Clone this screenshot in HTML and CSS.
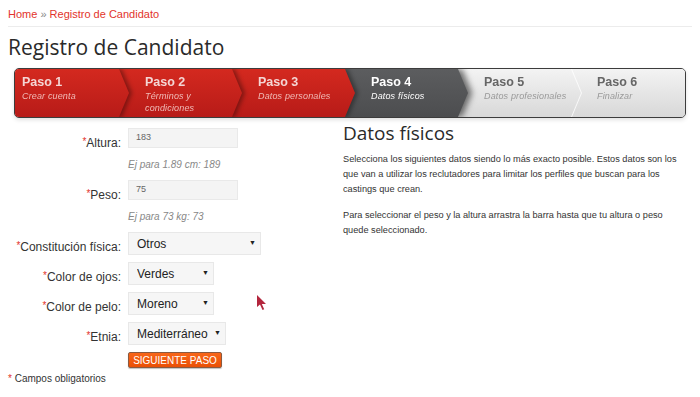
FILE: index.html
```html
<!DOCTYPE html>
<html lang="es">
<head>
    <meta charset="UTF-8">
    <meta name="viewport" content="width=device-width, initial-scale=1.0">
    <title>Registro de Candidato</title>
    <link rel="stylesheet" href="styles.css">
</head>
<body>
    <div class="breadcrumb">
        <a href="#">Home</a> <span class="sep">&raquo;</span> <a href="#">Registro de Candidato</a>
    </div>

    <h1>Registro de Candidato</h1>

    <div class="steps">
        <div class="step done first"><div class="step-body">
            <strong>Paso 1</strong><em>Crear cuenta</em>
        </div></div>
        <div class="step done"><div class="step-body">
            <strong>Paso 2</strong><em>Términos y condiciones</em>
        </div></div>
        <div class="step done"><div class="step-body">
            <strong>Paso 3</strong><em>Datos personales</em>
        </div></div>
        <div class="step current"><div class="step-body">
            <strong>Paso 4</strong><em>Datos físicos</em>
        </div></div>
        <div class="step todo"><div class="step-body">
            <strong>Paso 5</strong><em>Datos profesionales</em>
        </div></div>
        <div class="step todo last"><div class="step-body">
            <strong>Paso 6</strong><em>Finalizar</em>
        </div></div>
    </div>

    <div class="content">
        <form class="form">
            <div class="row">
                <label><span class="req">*</span>Altura:</label>
                <div class="field">
                    <input type="text" class="text-input" value="183">
                    <div class="hint">Ej para 1.89 cm: 189</div>
                </div>
            </div>
            <div class="row">
                <label><span class="req">*</span>Peso:</label>
                <div class="field">
                    <input type="text" class="text-input" value="75">
                    <div class="hint">Ej para 73 kg: 73</div>
                </div>
            </div>
            <div class="row">
                <label><span class="req">*</span>Constitución física:</label>
                <div class="select-wrap w-wide">
                    <select><option>Otros</option></select>
                </div>
            </div>
            <div class="row">
                <label><span class="req">*</span>Color de ojos:</label>
                <div class="select-wrap w-small">
                    <select><option>Verdes</option></select>
                </div>
            </div>
            <div class="row">
                <label><span class="req">*</span>Color de pelo:</label>
                <div class="select-wrap w-small">
                    <select><option>Moreno</option></select>
                </div>
            </div>
            <div class="row">
                <label><span class="req">*</span>Etnia:</label>
                <div class="select-wrap w-mid">
                    <select><option>Mediterráneo</option></select>
                </div>
            </div>
            <div class="row actions">
                <button type="button" class="btn-next">SIGUIENTE PASO</button>
            </div>
            <p class="required-note"><span class="req">*</span> Campos obligatorios</p>
        </form>

        <div class="info">
            <h2>Datos físicos</h2>
            <p>Selecciona los siguientes datos siendo lo más exacto posible. Estos datos son los que van a utilizar los reclutadores para limitar los perfiles que buscan para los castings que crean.</p>
            <p>Para seleccionar el peso y la altura arrastra la barra hasta que tu altura o peso quede seleccionado.</p>
        </div>
    </div>

    <svg class="cursor" width="10" height="16" viewBox="0 0 10 16">
        <path d="M0 0 L0 12 L3 9.5 L5.5 15 L7.2 14.2 L4.8 9 L9 9 Z" fill="#b3263d"/>
    </svg>
</body>
</html>
```

FILE: styles.css
```css
body {
    font-family: "Liberation Sans", Arial, sans-serif;
    margin: 0;
    padding: 0 8px;
    background-color: #fff;
    color: #333;
    position: relative;
}

a {
    color: #e2332b;
    text-decoration: none;
}

.breadcrumb {
    font-size: 11px;
    line-height: 13px;
    padding: 8px 0 5px;
    border-bottom: 1px solid #ececec;
}

.breadcrumb .sep {
    color: #888;
}

h1 {
    font-family: "Open Sans", sans-serif;
    font-weight: 400;
    font-size: 21px;
    line-height: 26px;
    color: #2a2a2a;
    margin: 7px 0 8px;
}

/* wizard steps */
.steps {
    display: flex;
    margin: 0 6px;
    height: 48px;
    border: 1px solid #3c3c3c;
    border-radius: 5px;
    overflow: hidden;
    background-color: #ddd;
    box-shadow: 0 2px 4px rgba(0,0,0,0.12);
}

.step {
    flex: 0 0 123px;
    margin-right: -10px;
    position: relative;
    filter: drop-shadow(3px 0 2px rgba(0,0,0,0.35));
}

.step.first {
    flex-basis: 114px;
}

.step:nth-child(1) { z-index: 6; }
.step:nth-child(2) { z-index: 5; }
.step:nth-child(3) { z-index: 4; }
.step:nth-child(4) { z-index: 3; }
.step:nth-child(5) { z-index: 2; }
.step:nth-child(6) { z-index: 1; }

.step-body {
    height: 100%;
    box-sizing: border-box;
    padding: 6px 12px 0 26px;
    clip-path: polygon(0 0, calc(100% - 10px) 0, 100% 50%, calc(100% - 10px) 100%, 0 100%);
}

.step.first .step-body {
    padding-left: 7px;
}

.step-body strong {
    display: block;
    font-size: 12.5px;
    line-height: 15px;
}

.step-body em {
    display: block;
    font-size: 9px;
    line-height: 12px;
    letter-spacing: 0.15px;
}

.step.done .step-body {
    background: linear-gradient(#d4291f, #b71b18);
    color: #f4d6d4;
}

.step.done em {
    color: #f0bab6;
}

.step.current .step-body {
    background: linear-gradient(#5c5d5f, #4c4d4f);
    color: #fff;
}

.step.current {
    filter: drop-shadow(4px 0 3px rgba(0,0,0,0.55));
}

.step.todo .step-body {
    background: linear-gradient(#f3f3f3, #d8d8d8);
    color: #666;
}

.step.todo {
    filter: drop-shadow(1px 0 0 rgba(255,255,255,0.8));
}

.step.todo em {
    color: #999;
}

/* content */
.content {
    display: flex;
    margin-top: 10px;
}

.form {
    width: 335px;
    flex-shrink: 0;
}

.row {
    display: flex;
    align-items: flex-start;
    margin-bottom: 7px;
}

.row label {
    width: 113px;
    margin-right: 7px;
    text-align: right;
    font-size: 12px;
    line-height: 14px;
    padding-top: 8px;
    color: #333;
}

.req {
    color: #e2332b;
    font-size: 10px;
    vertical-align: top;
}

.row label .req {
    position: relative;
    top: -1px;
}

.text-input {
    display: block;
    width: 110px;
    height: 20px;
    box-sizing: border-box;
    padding: 0 7px 2px;
    font-family: "Liberation Sans", Arial, sans-serif;
    font-size: 9px;
    color: #666;
    background-color: #f4f4f4;
    border: 1px solid #e9e9e9;
}

.hint {
    font-size: 10px;
    font-style: italic;
    color: #888;
    line-height: 14px;
    margin: 10px 0 1px;
}

.select-wrap {
    position: relative;
    height: 23px;
}

.select-wrap select {
    appearance: none;
    -webkit-appearance: none;
    width: 100%;
    height: 100%;
    box-sizing: border-box;
    padding: 0 8px;
    font-family: "Liberation Sans", Arial, sans-serif;
    font-size: 12px;
    color: #222;
    background-color: #f6f6f6;
    border: 1px solid #e8e8e8;
    border-radius: 0;
}

.select-wrap::after {
    content: "\25BC";
    position: absolute;
    right: 5px;
    top: 7px;
    font-size: 7px;
    color: #222;
}

.w-wide { width: 133px; }
.w-small { width: 86px; }
.w-mid { width: 98px; }

.actions {
    padding-left: 120px;
    margin-bottom: 0;
}

.btn-next {
    width: 94px;
    height: 16px;
    padding: 0;
    font-family: "Liberation Sans", Arial, sans-serif;
    font-size: 10px;
    color: #fff;
    background: linear-gradient(#f8661a, #ea4f05);
    border: 1px solid #8a5a40;
    border-radius: 2px;
    box-shadow: 0 1px 1px rgba(0,0,0,0.25);
    cursor: pointer;
}

.required-note {
    font-size: 10px;
    margin: 5px 0 0;
}

.info {
    flex: 1;
    padding-right: 12px;
}

.info h2 {
    font-family: "Open Sans", sans-serif;
    font-weight: 400;
    font-size: 19px;
    line-height: 24px;
    color: #2a2a2a;
    margin: -7px 0 7px;
}

.info p {
    font-size: 9.2px;
    line-height: 15px;
    margin: 0 0 11px;
}

.cursor {
    position: absolute;
    left: 257px;
    top: 295px;
}
```
